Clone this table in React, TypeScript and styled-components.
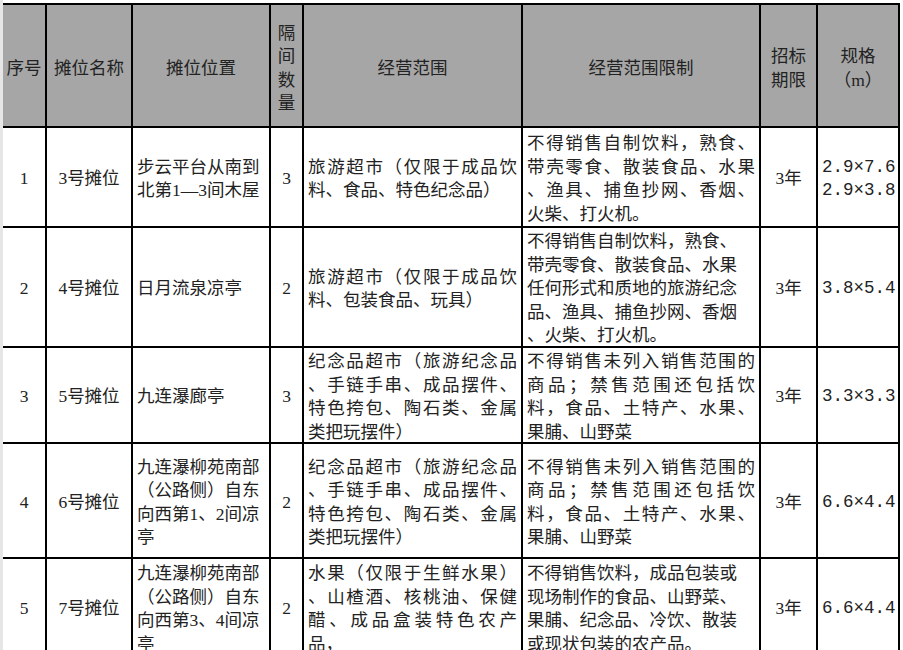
import React from "react";
import styled, { createGlobalStyle } from "styled-components";

const GlobalStyle = createGlobalStyle`
  html, body {
    margin: 0;
    padding: 0;
    overflow: hidden;
    background: #fff;
  }
  body {
    font-family: "Liberation Serif", "Noto Sans CJK SC", serif;
  }
`;

const Page = styled.div`
  display: flex;
  height: 650px;
  overflow: hidden;
`;

const Gutter = styled.div`
  flex: none;
  width: 3px;
  background: #e6e6e6;
`;

const Sheet = styled.div`
  align-self: flex-start;
  margin-top: 3px;
  display: grid;
  grid-template-columns: 44px 86px 138px 33px 219px 238px 57px 82px;
  grid-template-rows: 123px 100px 120px 96px 115px 98px;
  border-top: 2px solid #000;
  font-size: 17.5px;
  line-height: 23.5px;
  color: #222;
`;

const Cell = styled.div<{ $head?: boolean; $align?: "left" | "center" }>`
  box-sizing: border-box;
  display: flex;
  flex-direction: column;
  justify-content: center;
  overflow: hidden;
  border-right: 2px solid #000;
  border-bottom: 2px solid #000;
  background: ${(p) => (p.$head ? "#a6a6a6" : "#fff")};
  padding: ${(p) => (p.$head ? "6px 3px 0" : "4px 4px 0")};
  text-align: ${(p) => p.$align ?? "center"};
`;

const Line = styled.div<{ $justify?: boolean }>`
  text-align: ${(p) => (p.$justify ? "justify" : "inherit")};
  text-align-last: ${(p) => (p.$justify ? "justify" : "auto")};
`;

const Spec = styled.div`
  font-family: "Liberation Mono", "Noto Sans CJK SC", monospace;
`;

type Block = { lines: string[]; justify?: boolean };

type Row = {
  no: string;
  name: string;
  place: string[];
  rooms: string;
  scope: Block;
  limit: Block;
  term: string;
  size: string[];
};

const headers: string[][] = [
  ["序号"],
  ["摊位名称"],
  ["摊位位置"],
  ["隔", "间", "数", "量"],
  ["经营范围"],
  ["经营范围限制"],
  ["招标", "期限"],
  ["规格", "（m）"],
];

const souvenirScope: Block = {
  lines: ["纪念品超市（旅游纪念品", "、手链手串、成品摆件、", "特色挎包、陶石类、金属", "类把玩摆件）"],
  justify: true,
};

const souvenirLimit: Block = {
  lines: ["不得销售未列入销售范围的", "商品；禁售范围还包括饮", "料，食品、土特产、水果、", "果脯、山野菜"],
  justify: true,
};

const rows: Row[] = [
  {
    no: "1",
    name: "3号摊位",
    place: ["步云平台从南到", "北第1—3间木屋"],
    rooms: "3",
    scope: { lines: ["旅游超市（仅限于成品饮", "料、食品、特色纪念品）"], justify: true },
    limit: {
      lines: ["不得销售自制饮料，熟食、", "带壳零食、散装食品、水果", "、渔具、捕鱼抄网、香烟、", "火柴、打火机。"],
      justify: true,
    },
    term: "3年",
    size: ["2.9×7.6", "2.9×3.8"],
  },
  {
    no: "2",
    name: "4号摊位",
    place: ["日月流泉凉亭"],
    rooms: "2",
    scope: { lines: ["旅游超市（仅限于成品饮", "料、包装食品、玩具）"], justify: true },
    limit: {
      lines: [
        "不得销售自制饮料，熟食、",
        "带壳零食、散装食品、水果",
        "任何形式和质地的旅游纪念",
        "品、渔具、捕鱼抄网、香烟",
        "、火柴、打火机。",
      ],
    },
    term: "3年",
    size: ["3.8×5.4"],
  },
  {
    no: "3",
    name: "5号摊位",
    place: ["九连瀑廊亭"],
    rooms: "3",
    scope: souvenirScope,
    limit: souvenirLimit,
    term: "3年",
    size: ["3.3×3.3"],
  },
  {
    no: "4",
    name: "6号摊位",
    place: ["九连瀑柳苑南部", "（公路侧）自东", "向西第1、2间凉", "亭"],
    rooms: "2",
    scope: souvenirScope,
    limit: souvenirLimit,
    term: "3年",
    size: ["6.6×4.4"],
  },
  {
    no: "5",
    name: "7号摊位",
    place: ["九连瀑柳苑南部", "（公路侧）自东", "向西第3、4间凉", "亭"],
    rooms: "2",
    scope: {
      lines: ["水果（仅限于生鲜水果）", "、山楂酒、核桃油、保健", "醋、成品盒装特色农产", "品，"],
      justify: true,
    },
    limit: {
      lines: ["不得销售饮料，成品包装或", "现场制作的食品、山野菜、", "果脯、纪念品、冷饮、散装", "或现状包装的农产品。"],
    },
    term: "3年",
    size: ["6.6×4.4"],
  },
];

// all lines but the last are stretched, like Excel's justify alignment
const Lines = ({ block }: { block: Block }) => (
  <>
    {block.lines.map((t, i) => (
      <Line key={i} $justify={block.justify && i < block.lines.length - 1}>
        {t}
      </Line>
    ))}
  </>
);

const App = () => (
  <>
    <GlobalStyle />
    <Page>
      <Gutter />
      <Sheet>
        {headers.map((h, i) => (
          <Cell key={"h" + i} $head>
            {h.map((t) => (
              <Line key={t}>{t}</Line>
            ))}
          </Cell>
        ))}
        {rows.map((r) => (
          <React.Fragment key={r.no}>
            <Cell>{r.no}</Cell>
            <Cell>{r.name}</Cell>
            <Cell $align="left">
              <Lines block={{ lines: r.place }} />
            </Cell>
            <Cell>{r.rooms}</Cell>
            <Cell $align="left">
              <Lines block={r.scope} />
            </Cell>
            <Cell $align="left">
              <Lines block={r.limit} />
            </Cell>
            <Cell>{r.term}</Cell>
            <Cell>
              {r.size.map((s) => (
                <Spec key={s}>{s}</Spec>
              ))}
            </Cell>
          </React.Fragment>
        ))}
      </Sheet>
    </Page>
  </>
);

export default App;
